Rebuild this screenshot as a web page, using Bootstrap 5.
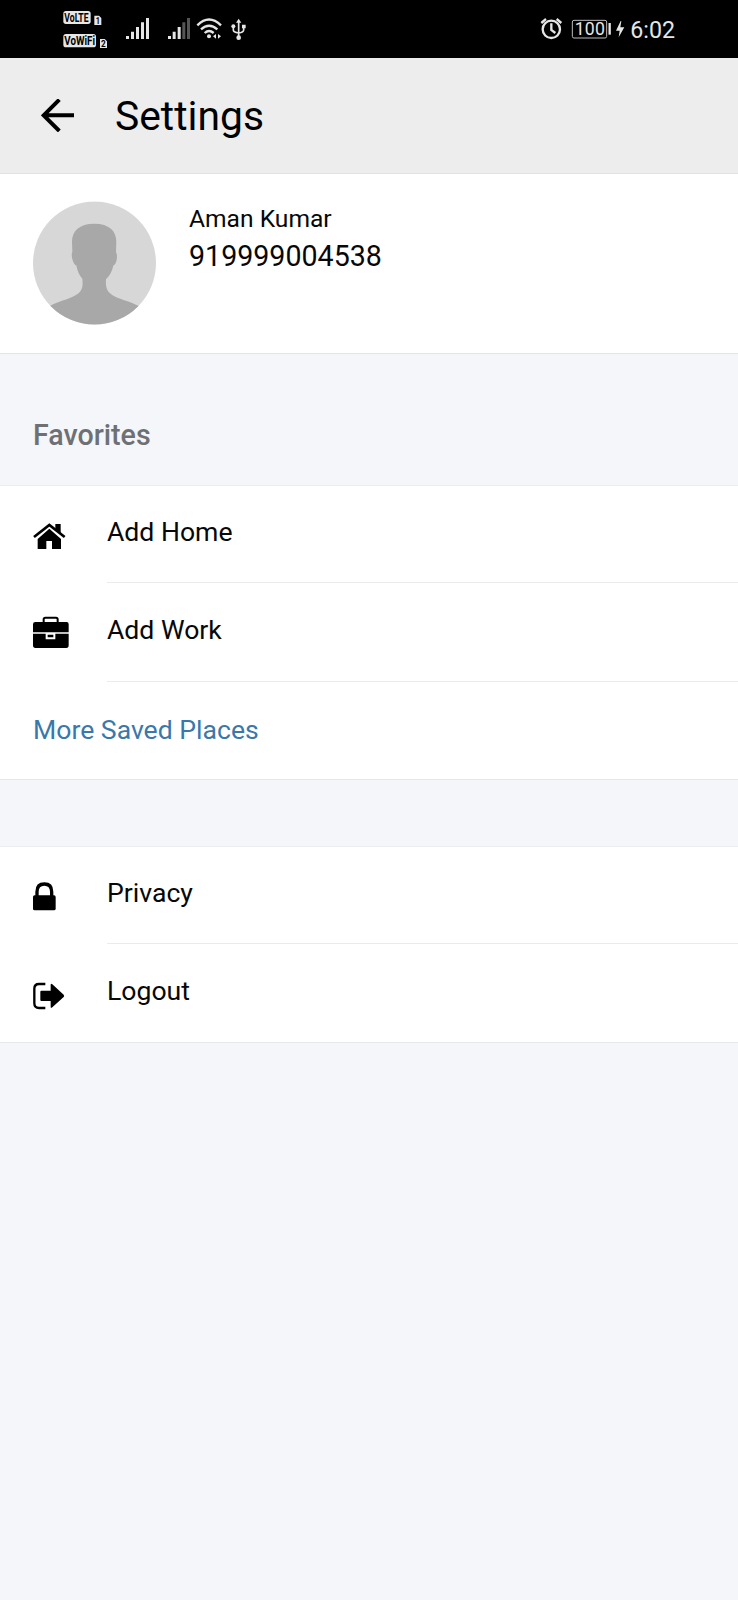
<!DOCTYPE html>
<html lang="en">
<head>
<meta charset="utf-8">
<meta name="viewport" content="width=device-width, initial-scale=1">
<title>Settings</title>
<link href="https://cdn.jsdelivr.net/npm/bootstrap@5.3.0/dist/css/bootstrap.min.css" rel="stylesheet">
<style>
  body { font-family: Roboto, sans-serif; background: #f4f6fa; color: #080808; }
  svg { display: block; flex: none; }
  .status-bar { height: 58px; background: #000; color: #e6e6e6; padding: 0 63px; }
  .clock { font-size: 23.2px; line-height: 30px; padding-top: 2px; margin-left: 2px; }
  .app-bar { height: 116px; background: #ededed; border-bottom: 1px solid #e2e2e2; padding-left: 41px; }
  .app-title { font-size: 40.8px; line-height: 48px; font-weight: 400; margin-left: 41px; padding-top: 1px; color: #000; }
  .profile { height: 180px; padding: 27px 33px; border-bottom: 1px solid #e3e5e8; }
  .profile-text { margin-left: 33px; }
  .person { font-size: 24.6px; line-height: 30px; margin-top: 3px; }
  .phone { font-size: 28.6px; line-height: 34px; margin-top: 5px; }
  .section-title { height: 132px; padding: 64px 33px 0; font-size: 28.6px; line-height: 34px; font-weight: 500; color: #6f7074; border-bottom: 1px solid #ededf1; }
  .group { border-bottom: 1px solid #e6e7eb; }
  .entry { padding-left: 33px; }
  .entry-icon { width: 74px; padding-top: 30px; }
  .entry-label { height: 97px; padding-top: 31px; font-size: 26.6px; line-height: 30px; border-bottom: 1px solid #ebebeb; }
  .entry + .entry .entry-label { height: 99px; padding-top: 32px; }
  .entry:last-child .entry-label { border-bottom: 0; height: 98px !important; }
  .saved { height: 97px; padding: 33px 33px 0; font-size: 26.6px; line-height: 30px; color: #3a78ac; }
  .gap-band { height: 67px; border-bottom: 1px solid #ededf1; }
</style>
</head>
<body>
<header>
  <div class="status-bar d-flex justify-content-between align-items-center">
    <svg width="190" height="58" viewBox="39 0 570 174" fill="#e6e6e6">
      <rect x="40" y="33" width="82" height="39" rx="8"/>
      <rect x="40" y="102" width="98" height="40" rx="8"/>
      <path d="M133 47h14l7 7v21h-21zM150 117h14l7 7v20h-21z"/>
      <g font-family="Roboto, sans-serif" font-weight="700" fill="#000">
        <text transform="translate(43 66) scale(.7 1)" font-size="37">VoLTE</text>
        <text transform="translate(43 135) scale(.79 1)" font-size="37">VoWiFi</text>
        <text transform="translate(137 71) scale(.85 1)" font-size="26">1</text>
        <text transform="translate(153 140) scale(.95 1)" font-size="26">2</text>
      </g>
      <path d="M228 108h9v9h-9zM243 95h9v22h-9zM258 81h9v36h-9zM273 67h9v50h-9zM288 54h9v63h-9z"/>
      <path d="M354 108h9v9h-9zM368 95h9v22h-9zM383 81h9v36h-9z"/>
      <path fill="#555" d="M397 67h9v50h-9zM411 54h9v63h-9z"/>
      <g fill="none" stroke="#e6e6e6" stroke-width="7">
        <path d="M442 76q35-35 71 0M453 88q24-22 49 0M464 99q13-12 27 0"/>
        <path stroke-width="5" d="M566 66v46M550 82v8q0 7 16 9q15-2 15-10v-8"/>
      </g>
      <circle cx="477" cy="109" r="6"/>
      <path d="M498 102v14l-9-7zM504 102v14l9-7zM566 56l8 12h-16zM576 74h11v11h-11z"/>
      <circle cx="550" cy="79" r="6"/><circle cx="566" cy="113" r="7"/>
    </svg>
    <div class="d-flex align-items-center">
      <svg width="88" height="58" viewBox="33 0 264 174" fill="none" stroke="#e6e6e6">
        <circle cx="67" cy="88" r="26" stroke-width="7"/>
        <path stroke-width="7" d="M67 70v20l12 9M37 69l14-12M97 69L83 57"/>
        <rect x="130" y="61" width="103" height="53" rx="5" stroke-width="3" stroke="#bbb"/>
        <path d="M242 69v35" stroke-width="7"/>
        <path d="M275 63l-14 29h11l-3 20 17-30h-12l3-19z" fill="#e6e6e6" stroke="none"/>
        <text x="137" y="105" font-size="53" textLength="91" stroke="none" fill="#e6e6e6">100</text>
      </svg>
      <span class="clock">6:02</span>
    </div>
  </div>
  <nav class="app-bar d-flex align-items-center">
    <svg width="33" height="33" viewBox="124 147 99 99" fill="none" stroke="#000" stroke-width="12"><path d="M223 196H132M179 149l-47 47 47 47"/></svg>
    <h1 class="app-title mb-0">Settings</h1>
  </nav>
</header>
<main>
  <section class="profile bg-white d-flex">
    <svg width="123" height="124" viewBox="99 94 369 371">
      <clipPath id="disc"><circle cx="283.500" cy="279.500" r="184.500"/></clipPath>
      <g clip-path="url(#disc)">
        <path fill="#d7d7d7" d="M99 94h369v371H99z"/>
        <path fill="#a8a8a8" d="M283 162c45 0 66 22 66 54l-1 31c5 5 4 36-8 40-3 16-10 30-22 41-2 28 4 40 25 51 25 12 48 16 75 30v60H148v-60c27-14 55-20 77-32 20-11 25-22 22-50-9-10-15-24-18-40-11-4-17-34-12-41l-1-30c0-32 22-54 67-54z"/>
      </g>
    </svg>
    <div class="profile-text">
      <div class="person">Aman Kumar</div>
      <div class="phone">919999004538</div>
    </div>
  </section>
  <h2 class="section-title mb-0">Favorites</h2>
  <section class="group bg-white">
    <div class="entry d-flex">
      <div class="entry-icon pt-0"><svg class="mt-4" width="33" height="50" viewBox="99 330 99 150">
        <path d="M148 386l35 31v30h-27v-24h-17v24h-26v-30z"/>
        <path d="M166 372h16v29l-16-14z"/>
        <path d="M102 411l46-36 46 36" fill="none" stroke="#000" stroke-width="8"/></svg></div>
      <div class="entry-label flex-grow-1">Add Home</div>
    </div>
    <div class="entry d-flex">
      <div class="entry-icon"><svg width="37" height="36" viewBox="99 129 111 108">
        <path d="M131 157v-9q0-5 5-5h32q5 0 5 5v9" fill="none" stroke="#000" stroke-width="6"/>
        <path d="M106 156h94q6 0 6 7v24H99v-24q0-7 7-7zM99 191h38v17h29v-17h40v35q0 8-7 8h-93q-7 0-7-8zM143 194h17v8h-17z"/></svg></div>
      <div class="entry-label flex-grow-1">Add Work</div>
    </div>
    <div class="saved">More Saved Places</div>
  </section>
  <div class="gap-band"></div>
  <section class="group bg-white">
    <div class="entry d-flex">
      <div class="entry-icon"><svg width="23" height="36" viewBox="99 320 69 108">
        <path d="M111 378v-14q0-23 22-23t22 23v14" fill="none" stroke="#000" stroke-width="10"/>
        <rect x="99" y="375" width="68" height="45" rx="5"/></svg></div>
      <div class="entry-label flex-grow-1">Privacy</div>
    </div>
    <div class="entry d-flex">
      <div class="entry-icon"><svg width="32" height="39" viewBox="98 612 96 117">
        <path d="M135 642h-19q-14 0-14 14v44q0 14 14 14h19" fill="none" stroke="#000" stroke-width="7"/>
        <path d="M120 665q0-3 3-3h28v-17q0-6 5-2l34 31q3 4 0 7l-34 31q-5 4-5-2v-17h-28q-3 0-3-3z"/></svg></div>
      <div class="entry-label flex-grow-1">Logout</div>
    </div>
  </section>
</main>
<script src="https://cdn.jsdelivr.net/npm/bootstrap@5.3.0/dist/js/bootstrap.bundle.min.js"></script>
</body>
</html>
